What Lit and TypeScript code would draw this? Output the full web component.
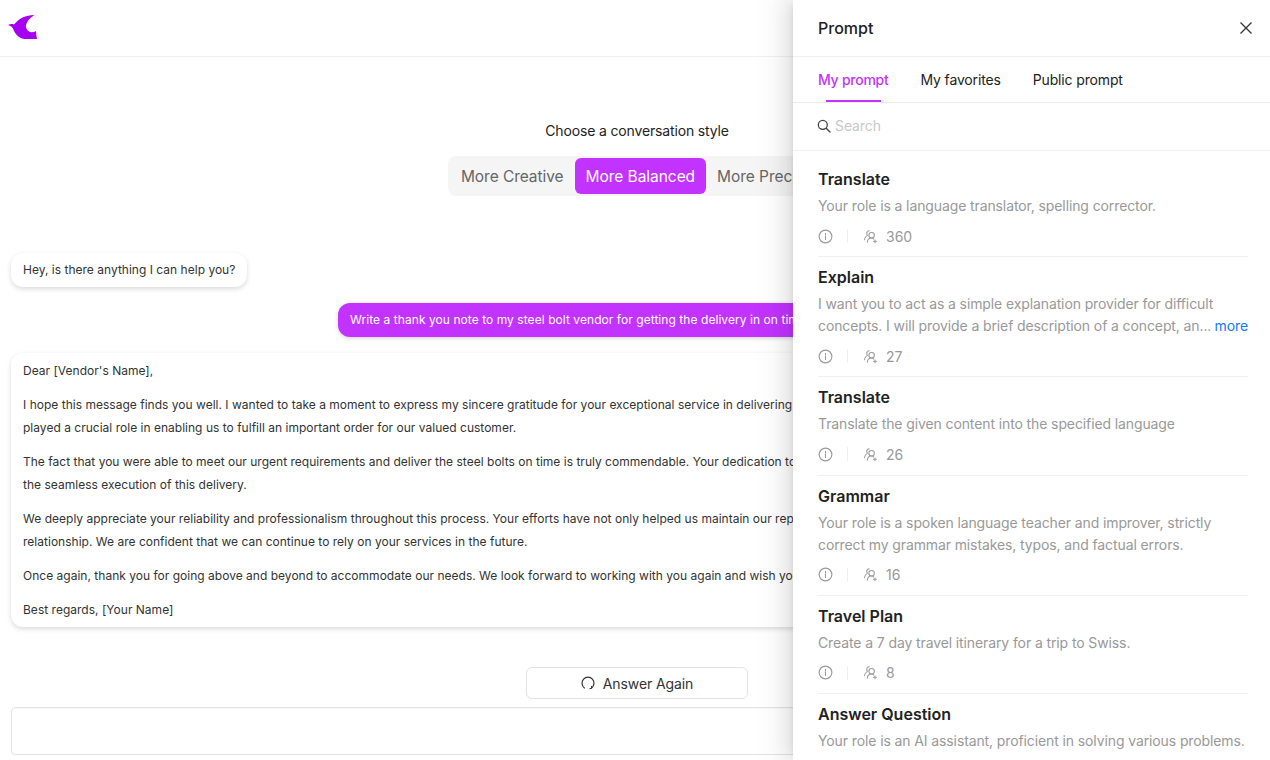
import { LitElement, html, css, svg } from "lit";
import { customElement } from "lit/decorators.js";

const ITEMS = [
  { title: "Translate", lines: ["Your role is a language translator, spelling corrector."], count: "360" },
  { title: "Explain", lines: ["I want you to act as a simple explanation provider for difficult", "concepts. I will provide a brief description of a concept, an..."], count: "27", more: true },
  { title: "Translate", lines: ["Translate the given content into the specified language"], count: "26" },
  { title: "Grammar", lines: ["Your role is a spoken language teacher and improver, strictly", "correct my grammar mistakes, typos, and factual errors."], count: "16" },
  { title: "Travel Plan", lines: ["Create a 7 day travel itinerary for a trip to Swiss."], count: "8" },
  { title: "Answer Question", lines: ["Your role is an AI assistant, proficient in solving various problems."], count: "" },
];

const infoIcon = svg`<svg class="info" viewBox="0 0 16 16" fill="none" stroke="#9a9a9a" stroke-width="1.2"><circle cx="8" cy="8" r="6.8"/><path d="M8 7.2v4M8 4.7v1.1" stroke-linecap="round"/></svg>`;
const usersIcon = svg`<svg class="users" viewBox="0 0 16 16" fill="none" stroke="#9a9a9a" stroke-width="1.1" stroke-linecap="round"><circle cx="9.2" cy="6.6" r="2.9"/><path d="M4.6 14c.3-2.6 2-4.4 4.2-4.4 1 0 1.9.3 2.6 1"/><path d="M6.6 1.9C5 2 4 3.3 4 4.8c0 .8.3 1.5.7 2C3 7.7 1.8 9.500 1.500 11.500"/><path d="M12.800 11.500v3.200M11.200 13.100h3.200"/></svg>`;

@customElement("app-root")
export class AppRoot extends LitElement {
  static styles = css`
    :host {
      display: block;
      position: relative;
      width: 1270px;
      height: 760px;
      overflow: hidden;
      background: #fff;
      font-family: Inter, "Liberation Sans", sans-serif;
      color: #222;
    }
    .main { display: flex; flex-direction: column; height: 760px; }
    .top {
      height: 56px; flex: none; display: flex; align-items: center;
      padding-left: 8px; border-bottom: 1px solid #f0f0f0;
    }
    .logo { width: 30px; height: 24px; display: block; margin-top: -2px; }
    .center { display: flex; flex-direction: column; align-items: center; padding-left: 4px; flex: none; }
    .choose { margin-top: 64px; font-size: 14px; line-height: 20px; color: #222; letter-spacing: -0.15px; }
    .seg {
      margin-top: 15px; display: flex; height: 36px; padding: 2px; background: #f5f5f5;
      border-radius: 8px; font-size: 15.5px; letter-spacing: -0.05px; line-height: 37px; color: #666;
    }
    .seg span { padding: 0 11px; border-radius: 6px; white-space: nowrap; }
    .seg .on { background: #c333ff; color: #fff; }
    .chat { margin-top: 57px; padding: 0 11px; display: flex; flex-direction: column; gap: 16px; font-size: 12px; letter-spacing: 0.015px; line-height: 23px; color: #333; flex: none; }
    .bubble {
      border-radius: 12px; padding: 5px 12px 6px; background: #fff;
      box-shadow: 0 2px 5px rgba(0, 0, 0, 0.15); white-space: nowrap; overflow: hidden;
    }
    .hello { align-self: flex-start; }
    .mine { margin-left: 327px; background: #c333ff; color: #fff; letter-spacing: 0.06px; box-shadow: 0 1px 4px rgba(0, 0, 0, 0.2); }
    .answer { padding: 5.5px 12px 6.5px; }
    .answer p { margin: 0 0 11px; }
    .answer p:last-child { margin-bottom: 0; }
    .again {
      margin-top: 40px; width: 222px; height: 32px; box-sizing: border-box;
      border: 1px solid #e3e3e3; border-radius: 6px; display: flex; align-items: center;
      justify-content: center; gap: 8px; font-size: 14px; letter-spacing: -0.1px; color: #333;
    }
    .again svg { width: 14px; height: 14px; }
    .input {
      margin: 8px 11px 0; height: 48px; box-sizing: border-box; flex: none;
      border: 1px solid #e3e3e3; border-radius: 4px; box-shadow: inset 0 1px 1px rgba(0, 0, 0, 0.03);
    }
    .drawer {
      position: absolute; top: 0; right: 0; bottom: 0; width: 477px; background: #fff;
      display: flex; flex-direction: column;
      box-shadow: -6px 0 16px 0 rgba(0, 0, 0, 0.08), -3px 0 6px -4px rgba(0, 0, 0, 0.12), -9px 0 28px 8px rgba(0, 0, 0, 0.05);
    }
    .dhead {
      height: 56px; flex: none; display: flex; align-items: center;
      justify-content: space-between; padding: 0 17px 0 25px; border-bottom: 1px solid #f0f0f0;
      font-size: 16px; font-weight: 500; color: #222;
    }
    .close { width: 14px; height: 14px; display: block; }
    .tabs {
      height: 45px; flex: none; display: flex; gap: 32px; padding-left: 25px;
      border-bottom: 1px solid #ececec; font-size: 14px; letter-spacing: -0.15px; line-height: 45px; color: #222;
    }
    .tab { position: relative; }
    .tab.on { color: #c333ff; font-weight: 500; letter-spacing: -0.25px; }
    .tab.on::after {
      content: ""; position: absolute; left: 8px; right: 8px; bottom: 0; height: 2px; background: #c333ff;
    }
    .search {
      height: 45px; padding-bottom: 2px; flex: none; display: flex; align-items: center; gap: 4px; padding-left: 24px;
      border-bottom: 1px solid #f0f0f0; font-size: 14px; letter-spacing: -0.1px; color: #c8c8c8;
    }
    .search svg { width: 14px; height: 14px; }
    .list { padding: 8px 22px 0 25px; overflow: hidden; }
    .item { padding: 8px 0 9.2px; border-bottom: 1px solid #f0f0f0; }
    .item:last-child { border-bottom: none; }
    .title { font-size: 16px; font-weight: 600; line-height: 24px; color: #222; margin-bottom: 4px; }
    .desc { font-size: 14px; letter-spacing: -0.11px; line-height: 22px; color: #999; white-space: nowrap; }
    .desc .row { display: flex; justify-content: space-between; }
    .more { color: #1677ff; }
    .meta { margin-top: 8px; height: 22px; display: flex; align-items: center; font-size: 14px; color: #999; }
    .info { width: 15px; height: 15px; }
    .sep { width: 1px; height: 14px; background: #efefef; margin: 0 15px 0 14px; }
    .users { width: 15px; height: 15px; margin-right: 8px; }
  `;

  render() {
    return html`
      <div class="main">
        <div class="top">
          <svg class="logo" viewBox="0 0 30 24">
            <path fill="#a600f0" d="M0 10C2 9 4 8.800 6 9.500 8.500 6.500 11 4.200 14.500 2.500 18 .9 22 .2 26.500 0 23 2.200 20.500 4.500 19 7.500c-1 1.700-1.200 3.300-1 4.800.5 2.500 2.400 4.500 5 4.900 1.900.2 3.500-.3 5-1.200.1 2.500.4 5.300 1 8-4.500.300-9 .400-12.500 0-3.500-.6-6.100-2-8-4.300C6.500 17.500 5.500 15 5 13.500 4 11.800 2 10.700 0 10Z"/>
          </svg>
        </div>
        <div class="center">
          <div class="choose">Choose a conversation style</div>
          <div class="seg"><span>More Creative</span><span class="on">More Balanced</span><span>More Precise</span></div>
        </div>
        <div class="chat">
          <div class="bubble hello">Hey, is there anything I can help you?</div>
          <div class="bubble mine">Write a thank you note to my steel bolt vendor for getting the delivery in on time to fill a customer order.</div>
          <div class="bubble answer">
            <p>Dear [Vendor's Name],</p>
            <p>I hope this message finds you well. I wanted to take a moment to express my sincere gratitude for your exceptional service in delivering the steel bolts on time. Your promptness<br />played a crucial role in enabling us to fulfill an important order for our valued customer.</p>
            <p>The fact that you were able to meet our urgent requirements and deliver the steel bolts on time is truly commendable. Your dedication to customer satisfaction was evident in<br />the seamless execution of this delivery.</p>
            <p>We deeply appreciate your reliability and professionalism throughout this process. Your efforts have not only helped us maintain our reputation but also strengthened our business<br />relationship. We are confident that we can continue to rely on your services in the future.</p>
            <p>Once again, thank you for going above and beyond to accommodate our needs. We look forward to working with you again and wish you continued success.</p>
            <p>Best regards, [Your Name]</p>
          </div>
        </div>
        <div class="center">
          <div class="again">
            <svg viewBox="0 0 14 14" fill="none" stroke="#333" stroke-width="1.200" stroke-linecap="round"><path d="M3.400 12A6 6 0 1 1 10.600 12"/><path d="M8.800 12.700 10.800 12.100 10.500 10.300" stroke-width="1"/></svg>
            Answer Again
          </div>
        </div>
        <div class="input"></div>
      </div>
      <aside class="drawer">
        <div class="dhead">
          <span>Prompt</span>
          <svg class="close" viewBox="0 0 14 14" fill="none" stroke="#333" stroke-width="1.300"><path d="M1.500 1.500 12.500 12.500M12.500 1.500 1.500 12.500"/></svg>
        </div>
        <div class="tabs">
          <div class="tab on">My prompt</div>
          <div class="tab">My favorites</div>
          <div class="tab">Public prompt</div>
        </div>
        <div class="search">
          <svg viewBox="0 0 14 14" fill="none" stroke="#444" stroke-width="1.300" stroke-linecap="round"><circle cx="5.800" cy="5.800" r="4.500"/><path d="M9.200 9.200 13 13"/></svg>
          Search
        </div>
        <div class="list">
          ${ITEMS.map(
            (it) => html`
              <div class="item">
                <div class="title">${it.title}</div>
                <div class="desc">
                  ${it.lines.map(
                    (l, i) => html`<div class="row"><span>${l}</span>${it.more && i === it.lines.length - 1 ? html`<span class="more">more</span>` : ""}</div>`
                  )}
                </div>
                ${it.count ? html`<div class="meta">${infoIcon}<span class="sep"></span>${usersIcon}${it.count}</div>` : ""}
              </div>
            `
          )}
        </div>
      </aside>
    `;
  }
}
